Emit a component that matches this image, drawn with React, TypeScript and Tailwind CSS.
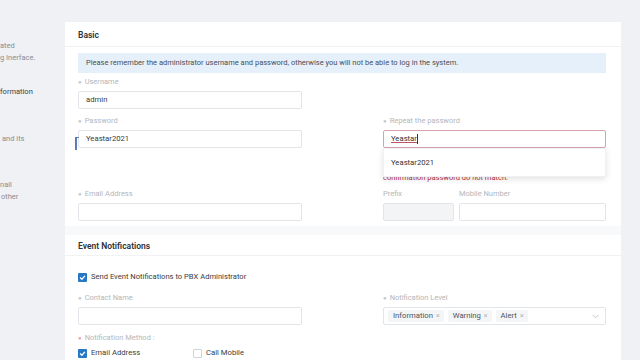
import React from "react";

function Check({ checked }: { checked: boolean }) {
  if (!checked) {
    return <span className="inline-block w-[9px] h-[9px] border border-[#cfd3da] bg-white rounded-[1px]" />;
  }
  return (
    <span className="inline-flex w-[9px] h-[9px] bg-[#2678c5] rounded-[1px] items-center justify-center">
      <svg width="9" height="9" viewBox="0 0 10 10">
        <path d="M2.4 5.1 L4.3 7 L7.7 3.2" stroke="white" strokeWidth="1.5" fill="none" />
      </svg>
    </span>
  );
}

function Label({ text, req = true, redStar = false }: { text: string; req?: boolean; redStar?: boolean }) {
  return (
    <div className="h-[10px] leading-[10px] text-[7.5px] text-[#b3b6bb] flex items-center">
      {req && <span className={"mr-[3px] text-[6px] " + (redStar ? "text-[#e9a0a8]" : "text-[#c2c5ca]")}>●</span>}
      <span>{text}</span>
    </div>
  );
}

function Input({ value = "", className = "" }: { value?: string; className?: string }) {
  return (
    <div className={"h-[18px] border border-[#e2e5ea] rounded-[2px] bg-white flex items-center pl-[7px] text-[7.7px] text-[#3a3a3a] " + className}>
      {value}
    </div>
  );
}

function Tag({ text }: { text: string }) {
  return (
    <span className="h-[12px] flex items-center pl-[5px] pr-[4px] bg-[#f4f5f7] rounded-[2px] text-[7.7px] text-[#505257]">
      {text}
      <span className="ml-[3px] text-[7px] text-[#b0b2b6]">×</span>
    </span>
  );
}

export default function App() {
  return (
    <div className="w-[640px] h-[360px] overflow-hidden bg-[#eff1f5] flex font-['Roboto',sans-serif]">
      {/* sidebar */}
      <div className="w-[65px] shrink-0 text-[7.5px] leading-[12px] text-[#8a8d93] pt-[40px] whitespace-nowrap overflow-hidden">
        <div>ated</div>
        <div>g Inerface.</div>
        <div className="mt-[22px] text-[#3d3f44]">formation</div>
        <div className="mt-[35px] pl-[2px]">and its</div>
        <div className="mt-[34px]">nail</div>
        <div className="pl-[1px]">other</div>
      </div>

      {/* card */}
      <div className="w-[556px] shrink-0 mt-[22px] bg-white relative">
        <div className="h-[25px] px-[13px] pt-[8px] leading-[10px] border-b border-[#f1f2f4] text-[8.5px] font-semibold text-[#2e3034]">
          Basic
        </div>
        <div className="pl-[13px] pr-[15px]">
          <div className="mt-[6px] h-[20px] bg-[#e5f0fb] flex items-center pl-[8px] text-[7.5px] text-[#4b4e53]">
            Please remember the administrator username and password, otherwise you will not be able to log in the system.
          </div>

          {/* username */}
          <div className="mt-[4px] w-[224px]">
            <Label text="Username" />
            <div className="mt-[4px]">
              <Input value="admin" />
            </div>
          </div>

          {/* password row */}
          <div className="mt-[7px] flex">
            <div className="w-[224px] shrink-0">
              <Label text="Password" />
              <div className="mt-[4px]">
                <Input value="Yeastar2021" />
              </div>
            </div>
            <div className="w-[223px] shrink-0 ml-[81px]">
              <Label text="Repeat the password" />
              <div className="mt-[4px] relative">
                <div className="h-[18px] border border-[#d7a3ac] rounded-[2px] bg-white flex items-center pl-[7px] text-[7.7px] text-[#333]">
                  <span className="underline decoration-[#b8556a]">Yeastar</span>
                  <span className="w-px h-[10px] bg-[#333]" />
                </div>
                <div className="absolute left-0 right-0 top-[18px] h-[29px] bg-white shadow-[0_2px_6px_rgba(0,0,0,0.12)] border border-[#f0f1f3] flex items-center pl-[7px] text-[7.7px] text-[#333] z-10">
                  Yeastar2021
                </div>
                <div className="mt-[25px] h-[10px] leading-[10px] text-[7.5px] text-[#b5313d]">
                  confirmation password do not match.
                </div>
              </div>
            </div>
          </div>

          {/* email row */}
          <div className="mt-[6px] flex">
            <div className="w-[224px] shrink-0">
              <Label text="Email Address" />
              <div className="mt-[4px]">
                <Input />
              </div>
            </div>
            <div className="w-[223px] shrink-0 ml-[81px] flex gap-[5px]">
              <div className="w-[71px] shrink-0">
                <Label text="Prefix" req={false} />
                <div className="mt-[4px] h-[18px] border border-[#e2e5ea] rounded-[2px] bg-[#f3f4f6]" />
              </div>
              <div className="flex-1">
                <Label text="Mobile Number" req={false} />
                <div className="mt-[4px]">
                  <Input />
                </div>
              </div>
            </div>
          </div>
        </div>

        <div className="mt-[5px] h-[9px] bg-[#f8f9fa]" />

        <div className="h-[21px] px-[13px] pt-[6px] leading-[10px] border-b border-[#f1f2f4] text-[8.5px] font-semibold text-[#2e3034]">
          Event Notifications
        </div>

        <div className="pl-[13px] pr-[15px]">
          <div className="mt-[16px] h-[10px] flex items-center gap-[4px] text-[7.6px] text-[#3a3c40]">
            <Check checked />
            <span>Send Event Notifications to PBX Administrator</span>
          </div>

          <div className="mt-[11px] flex">
            <div className="w-[224px] shrink-0">
              <Label text="Contact Name" />
              <div className="mt-[4px]">
                <Input />
              </div>
            </div>
            <div className="w-[223px] shrink-0 ml-[81px]">
              <Label text="Notification Level" />
              <div className="mt-[4px] h-[18px] border border-[#e2e5ea] rounded-[2px] bg-white flex items-center pl-[4px] pr-[6px] gap-[4px]">
                <Tag text="Information" />
                <Tag text="Warning" />
                <Tag text="Alert" />
                <span className="ml-auto">
                  <svg width="7" height="5" viewBox="0 0 8 5">
                    <path d="M0.8 0.8 L4 4 L7.2 0.8" stroke="#b8bbc0" strokeWidth="0.9" fill="none" />
                  </svg>
                </span>
              </div>
            </div>
          </div>

          <div className="mt-[8px]">
            <Label text="Notification Method :" redStar />
          </div>
          <div className="mt-[5px] h-[10px] flex items-center text-[7.7px] text-[#3a3c40]">
            <div className="w-[115px] flex items-center gap-[4px]">
              <Check checked />
              <span>Email Address</span>
            </div>
            <div className="flex items-center gap-[4px]">
              <Check checked={false} />
              <span>Call Mobile</span>
            </div>
          </div>
        </div>

        {/* blue bracket artifact */}
        <div className="absolute left-[10px] top-[115px] w-[4px] h-[13px] border-l-2 border-t border-[#5c7db3]" />
      </div>

      <div className="flex-1" />
    </div>
  );
}
